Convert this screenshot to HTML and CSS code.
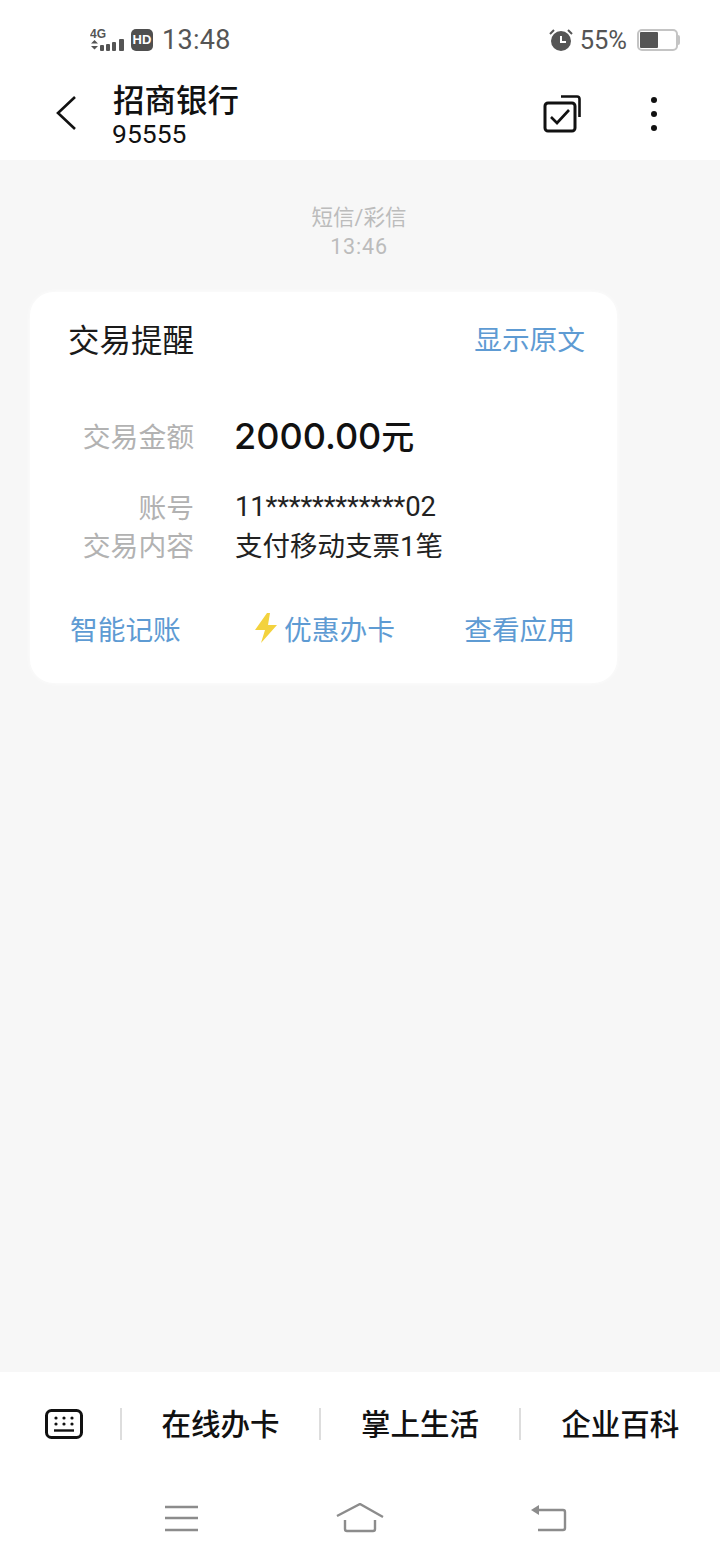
FILE: index.html
```html
<!DOCTYPE html>
<html lang="zh-CN">
<head>
<meta charset="utf-8">
<title>招商银行</title>
<link rel="stylesheet" href="styles.css">
</head>
<body>
<div class="phone">
  <div class="top">
    <div class="status">
      <div class="status-left">
        <svg class="sig" viewBox="0 0 37 24" width="37" height="24">
          <text x="0" y="9.500" class="sig-text">4G</text>
          <path d="M1 15.500l3.500-3.500 3.500 3.500zM1 18l3.500 3.500 3.500-3.500z" fill="#555"/>
          <rect x="10" y="17" width="4" height="6" rx="1" fill="#555"/>
          <rect x="16" y="16" width="4" height="7" rx="1" fill="#555"/>
          <rect x="22" y="14" width="4" height="9" rx="1" fill="#555"/>
          <rect x="29" y="11" width="5" height="12" rx="1" fill="#555"/>
        </svg>
        <span class="hd">HD</span>
        <span class="time">13:48</span>
      </div>
      <div class="status-right">
        <svg class="alarm" viewBox="0 0 24 24" width="24" height="24">
          <circle cx="12" cy="13" r="10" fill="#555"/>
          <path d="M12 8v6h5" fill="none" stroke="#fff" stroke-width="2"/>
          <path d="M1 6l4-4M23 6l-4-4" stroke="#555" stroke-width="2" fill="none"/>
        </svg>
        <span class="pct">55%</span>
        <span class="battery"><span class="battery-fill"></span></span>
        <span class="battery-nub"></span>
      </div>
    </div>
    <div class="header">
      <svg class="back" viewBox="0 0 22 36" width="22" height="36">
        <path d="M20 2L3 18l17 16" fill="none" stroke="#111" stroke-width="2.600"/>
      </svg>
      <div class="who">
        <div class="name">招商银行</div>
        <div class="number">95555</div>
      </div>
      <svg class="select" viewBox="0 0 40 40" width="40" height="40">
        <path d="M18 2.500h16a2.500 2.500 0 0 1 2.500 2.500v18" fill="none" stroke="#111" stroke-width="2.600"/>
        <rect x="2" y="9" width="30" height="28" rx="3" fill="#fff" stroke="#111" stroke-width="3"/>
        <path d="M8 23l6 6 12-13" fill="none" stroke="#111" stroke-width="2.600"/>
      </svg>
      <div class="dots"><i></i><i></i><i></i></div>
    </div>
  </div>
  <main class="thread">
    <div class="meta">短信/彩信<br><span class="meta-time">13:46</span></div>
    <section class="card">
      <div class="card-head">
        <span class="card-title">交易提醒</span>
        <span class="link">显示原文</span>
      </div>
      <div class="row amount-row">
        <span class="label">交易金额</span>
        <span class="amount">2000.00<span class="unit">元</span></span>
      </div>
      <div class="row first-row">
        <span class="label">账号</span>
        <span class="value acct">11************02</span>
      </div>
      <div class="row">
        <span class="label">交易内容</span>
        <span class="value">支付移动支票1笔</span>
      </div>
      <div class="actions">
        <span class="link">智能记账</span>
        <span class="link promo">
          <svg class="bolt" viewBox="0 0 24 31" width="24" height="31">
            <path d="M13 0L1 17h10L7 30l16-18h-9l2-12z" fill="#f3d23e"/>
          </svg>优惠办卡</span>
        <span class="link">查看应用</span>
      </div>
    </section>
  </main>
  <div class="bottom">
    <div class="menu">
      <div class="kbd-cell">
        <svg viewBox="0 0 38 30" width="38" height="30">
          <rect x="1.500" y="1.500" width="35" height="27" rx="5" fill="none" stroke="#111" stroke-width="3"/>
          <g fill="#111"><circle cx="11" cy="9" r="1.600"/><circle cx="19" cy="9" r="1.600"/><circle cx="27" cy="9" r="1.600"/><circle cx="11" cy="15" r="1.600"/><circle cx="19" cy="15" r="1.600"/><circle cx="27" cy="15" r="1.600"/></g>
          <path d="M9 21.500h20" stroke="#111" stroke-width="2.400"/>
        </svg>
      </div>
      <div class="menu-item">在线办卡</div>
      <div class="menu-item">掌上生活</div>
      <div class="menu-item">企业百科</div>
    </div>
    <div class="nav">
      <svg viewBox="0 0 34 28" width="34" height="28"><path d="M1 3h33M1 14h33M1 26h33" stroke="#8c8c8c" stroke-width="2.400"/></svg>
      <svg viewBox="0 0 48 30" width="48" height="30"><path d="M1 13L24 1l23 13M9 17v9a2 2 0 0 0 2 2h26a2 2 0 0 0 2-2v-9" fill="none" stroke="#8c8c8c" stroke-width="2.400"/></svg>
      <svg viewBox="0 0 36 28" width="36" height="28"><path d="M4 6h28a2 2 0 0 1 2 2v16a2 2 0 0 1-2 2H7" fill="none" stroke="#8c8c8c" stroke-width="2.400"/><path d="M0 6l8-5v10z" fill="#8c8c8c"/></svg>
    </div>
  </div>
</div>
</body>
</html>
```
FILE: styles.css
```css
* { box-sizing: border-box; }
html, body { margin: 0; padding: 0; }
body {
  width: 720px;
  height: 1560px;
  overflow: hidden;
  background: #fff;
  font-family: Roboto, "Noto Sans CJK SC", sans-serif;
  color: #111;
}
.phone { width: 720px; height: 1560px; display: flex; flex-direction: column; }
.top { height: 160px; background: #fff; }
.status {
  height: 80px;
  padding: 20px 40px 0 90px;
  display: flex;
  justify-content: space-between;
  align-items: flex-start;
}
.status-left, .status-right { display: flex; align-items: center; height: 40px; }
.sig-text { font: 700 12px "Liberation Sans", sans-serif; fill: #555; }
.hd {
  margin-left: 4px;
  width: 22px;
  height: 22px;
  border-radius: 5px;
  background: #4f4f4f;
  color: #fff;
  font: 700 13px/22px "Liberation Sans", sans-serif;
  text-align: center;
}
.time { margin-left: 9px; font-size: 27px; color: #555; letter-spacing: 0.3px; }
.alarm { margin-right: 7px; }
.pct { font-size: 25.500px; color: #555; }
.battery {
  margin-left: 10px;
  width: 41px;
  height: 22px;
  border: 2px solid #c4c4c4;
  border-radius: 5px;
  padding: 1px;
  display: flex;
}
.battery-fill { width: 18px; background: #555; border-radius: 1px; }
.battery-nub { width: 2px; height: 10px; background: #c4c4c4; border-radius: 0 2px 2px 0; }
.header { height: 80px; display: flex; align-items: flex-start; padding-left: 55px; }
.back { margin-top: 15px; }
.who { margin-left: 36px; }
.name { font-size: 31.500px; font-weight: 500; line-height: 44px; }
.number { font-size: 26.500px; line-height: 24px; margin-top: -2px; margin-left: -1px; }
.select { margin-left: 304px; margin-top: 14px; }
.dots { margin-left: 68px; margin-top: 17px; display: flex; flex-direction: column; gap: 8px; }
.dots i { display: block; width: 6px; height: 6px; border-radius: 50%; background: #111; }
.thread { flex: 1; background: #f7f7f7; padding: 43px 103px 0 30px; }
.meta { text-align: center; width: 658px; font-size: 21.500px; line-height: 29px; color: #bcbcbc; }
.meta-time { letter-spacing: 0.8px; }
.card {
  margin-top: 31px;
  width: 587px;
  height: 391px;
  background: #fff;
  border-radius: 24px;
  padding: 24px 32px 0 38px;
  box-shadow: 0 0 5px rgba(255, 255, 255, 0.8);
}
.card-head { display: flex; justify-content: space-between; align-items: center; height: 44px; }
.card-title { font-size: 31.500px; color: #1a1a1a; }
.link { font-size: 27.700px; color: #5e9bd3; }
.row { display: flex; align-items: center; height: 38px; }
.amount-row { margin-top: 53px; height: 44px; }
.first-row { margin-top: 30px; }
.label { width: 126px; text-align: right; font-size: 27.800px; color: #b2b2b2; }
.value { margin-left: 41px; font-size: 27.500px; color: #222; white-space: nowrap; }
.acct { letter-spacing: -0.2px; }
.amount { margin-left: 40px; font-family: Inter, "Noto Sans CJK SC", sans-serif; font-size: 36px; font-weight: 500; color: #111; }
.unit { font-family: "Noto Sans CJK SC", sans-serif; font-size: 33px; }
.actions { margin-top: 45px; display: flex; align-items: center; justify-content: space-between; margin-left: 2px; margin-right: 10px; }
.promo { display: flex; align-items: center; gap: 6px; margin-left: 4px; }
.bolt { flex: none; }
.bottom { height: 188px; background: #fff; }
.menu { display: flex; padding-top: 36px; }
.kbd-cell { width: 122px; padding-left: 45px; height: 32px; display: flex; align-items: center; border-right: 2px solid #ddd; }
.menu-item { width: 200px; height: 32px; text-align: center; font-size: 29.500px; font-weight: 500; line-height: 34px; border-right: 2px solid #ddd; color: #111; }
.menu-item:last-child { border-right: 0; }
.nav { display: flex; justify-content: space-between; align-items: center; padding: 0 153px 0 164px; margin-top: 63px; }
.nav svg:nth-child(2) { margin-right: 9px; }
```
